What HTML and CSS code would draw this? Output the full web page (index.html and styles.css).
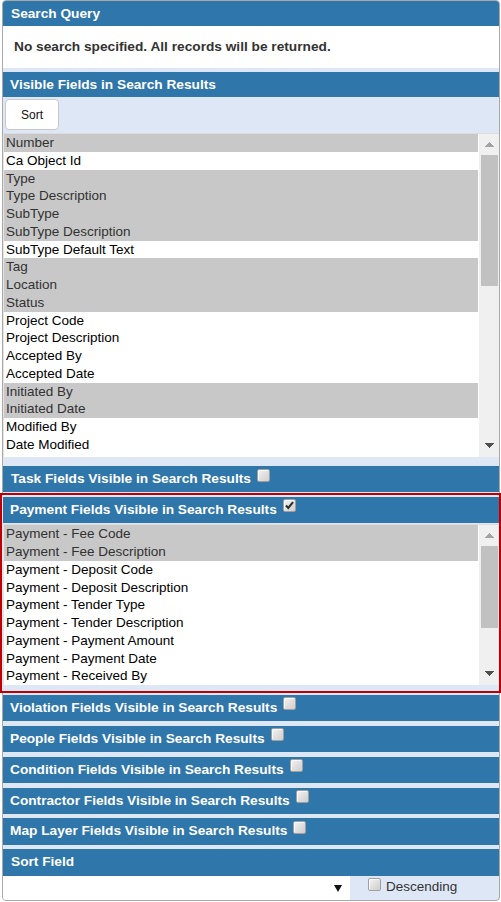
FILE: index.html
```html
<!DOCTYPE html>
<html>
<head>
<meta charset="utf-8">
<link rel="stylesheet" href="styles.css">
</head>
<body>
<div class="panel">
  <div class="hdr hdr-q">Search Query</div>
  <div class="query">No search specified. All records will be returned.</div>
  <div class="hdr hdr-fields">Visible Fields in Search Results</div>
  <div class="toolbar"><button class="sort-btn">Sort</button></div>
  <div class="listbox">
    <div class="options opts-main">
      <div class="opt sel">Number</div>
      <div class="opt">Ca Object Id</div>
      <div class="opt sel">Type</div>
      <div class="opt sel">Type Description</div>
      <div class="opt sel">SubType</div>
      <div class="opt sel">SubType Description</div>
      <div class="opt">SubType Default Text</div>
      <div class="opt sel">Tag</div>
      <div class="opt sel">Location</div>
      <div class="opt sel">Status</div>
      <div class="opt">Project Code</div>
      <div class="opt">Project Description</div>
      <div class="opt">Accepted By</div>
      <div class="opt">Accepted Date</div>
      <div class="opt sel">Initiated By</div>
      <div class="opt sel">Initiated Date</div>
      <div class="opt">Modified By</div>
      <div class="opt">Date Modified</div>
      <div class="opt">Issued By</div>
    </div>
    <div class="sb">
      <div class="sb-btn sb-up"><svg width="9" height="5" viewBox="0 0 9 5" shape-rendering="crispEdges"><polygon points="0,5 4.5,0 9,5" fill="#a3a3a3"/></svg></div>
      <div class="thumb thumb-main"></div>
      <div class="sb-fill"></div>
      <div class="sb-btn sb-down"><svg width="9" height="5" viewBox="0 0 9 5" shape-rendering="crispEdges"><polygon points="0,0 9,0 4.5,5" fill="#505050"/></svg></div>
    </div>
  </div>
  <div class="hdr task">Task Fields Visible in Search Results<span class="cb"></span></div>
  <div class="payment">
    <div class="hdr pay-hdr">Payment Fields Visible in Search Results<span class="cb"><svg width="11" height="11" viewBox="0 0 11 11"><polyline points="2,5.5 4.3,8 9,2.2" fill="none" stroke="#2b2b2b" stroke-width="2"/></svg></span></div>
    <div class="listbox pay-list">
      <div class="options opts-pay">
        <div class="opt sel">Payment - Fee Code</div>
        <div class="opt sel">Payment - Fee Description</div>
        <div class="opt">Payment - Deposit Code</div>
        <div class="opt">Payment - Deposit Description</div>
        <div class="opt">Payment - Tender Type</div>
        <div class="opt">Payment - Tender Description</div>
        <div class="opt">Payment - Payment Amount</div>
        <div class="opt">Payment - Payment Date</div>
        <div class="opt">Payment - Received By</div>
      </div>
      <div class="sb">
        <div class="sb-btn sb-up"><svg width="9" height="5" viewBox="0 0 9 5" shape-rendering="crispEdges"><polygon points="0,5 4.5,0 9,5" fill="#a3a3a3"/></svg></div>
        <div class="thumb thumb-pay"></div>
        <div class="sb-fill"></div>
        <div class="sb-btn sb-down"><svg width="9" height="5" viewBox="0 0 9 5" shape-rendering="crispEdges"><polygon points="0,0 9,0 4.5,5" fill="#505050"/></svg></div>
      </div>
    </div>
  </div>
  <div class="hdr sect first">Violation Fields Visible in Search Results<span class="cb"></span></div>
  <div class="hdr sect">People Fields Visible in Search Results<span class="cb"></span></div>
  <div class="hdr sect">Condition Fields Visible in Search Results<span class="cb"></span></div>
  <div class="hdr sect">Contractor Fields Visible in Search Results<span class="cb"></span></div>
  <div class="hdr sect">Map Layer Fields Visible in Search Results<span class="cb"></span></div>
  <div class="hdr sect sortfield">Sort Field</div>
  <div class="sortrow">
    <div class="select"><svg class="sel-arrow" width="8" height="7" viewBox="0 0 8 7"><polygon points="0,0 8,0 4,7" fill="#111"/></svg></div>
    <div class="desc"><span class="cb cb-desc"></span><span class="desc-text">Descending</span></div>
  </div>
</div>
</body>
</html>
```

FILE: styles.css
```css
* { box-sizing: border-box; }
html, body { margin: 0; padding: 0; background: #fff; }
body { font-family: "Liberation Sans", Arial, sans-serif; width: 501px; }

.panel {
  margin: 0 1px 0 2px;
  border: 1px solid #a9a9a9;
  border-radius: 4px;
  background: #dde7f5;
}

.hdr {
  background: #2f76ab;
  color: #fff;
  font-weight: bold;
  font-size: 13.7px;
  line-height: 25px;
  padding-left: 7px;
  white-space: nowrap;
}
.hdr-q { height: 25px; padding-left: 8px; border-radius: 3px 3px 0 0; }
.query {
  height: 42px;
  background: #fff;
  color: #333;
  font-weight: bold;
  font-size: 13.7px;
  line-height: 42px;
  padding-left: 11px;
}
.hdr-fields { margin-top: 4px; height: 25px; }

.toolbar { height: 36px; padding: 2px 0 0 2px; }
.sort-btn {
  display: block;
  width: 54px;
  height: 31px;
  background: #fff;
  border: 1px solid #c8c8c8;
  border-radius: 4px;
  font-family: "Liberation Sans", Arial, sans-serif;
  font-size: 12px;
  color: #111;
  padding: 0;
}

.listbox {
  display: flex;
  background: #fff;
  border-top: 1px solid #dcdcdc;
  border-left: 1px solid #e4e4e4;
}
.options {
  width: 475px;
  padding-right: 1px;
  overflow: hidden;
  background: #fff;
}
.opts-main { height: 322.75px; }
.opts-pay { height: 159.75px; }
.opt {
  height: 17.75px;
  line-height: 17.75px;
  font-size: 13.5px;
  color: #000;
  padding-left: 2px;
  white-space: nowrap;
}
.opt.sel { background: #c8c8c8; color: #323232; }

.sb {
  width: 20px;
  display: flex;
  flex-direction: column;
  background: #f0f0f0;
}
.sb-btn { display: flex; align-items: center; justify-content: center; }
.sb-btn svg { display: block; }
.sb-up { height: 21px; }
.sb-down { height: 23px; }
.thumb { margin-left: 2px; width: 17px; background: #c1c1c1; }
.thumb-main { height: 130.7px; }
.thumb-pay { height: 81.5px; }
.sb-fill { flex: 1; }

.task { margin-top: 9.25px; height: 26px; padding-left: 8px; }

.payment {
  margin: 1.3px -2px 0 -3px;
  border: 2px solid #c00000;
  padding: 1.4px 0 5.65px 1px;
  background: #dde7f5;
}
.pay-hdr { height: 26.6px; }
.pay-list { margin-top: 1px; }

.sect { height: 26.5px; margin-top: 4.36px; }
.sect.first { margin-top: 2.3px; }
.sortfield { padding-left: 8px; }

.cb {
  display: inline-block;
  width: 13px;
  height: 13px;
  margin-left: 6px;
  vertical-align: 1.5px;
  border: 1px solid #a0a0a0;
  border-radius: 2px;
  background: linear-gradient(135deg, #f4f4f4 0%, #dcdcdc 60%, #cfcfcf 100%);
  box-shadow: inset 1px 1px 0 rgba(255,255,255,0.7);
}
.cb svg { display: block; margin: 0; }

.sortrow { display: flex; height: 24.2px; }
.select {
  width: 347px;
  background: #fff;
  border-radius: 0 0 0 3px;
  display: flex;
  justify-content: flex-end;
  padding-right: 8px;
  padding-top: 9.2px;
}
.sel-arrow { display: block; }
.desc {
  flex: 1;
  display: flex;
  align-items: flex-start;
  padding: 2px 0 0 18px;
}
.cb-desc { margin-left: 0; margin-right: 5px; flex: none; }
.desc-text {
  font-size: 13.5px;
  color: #333;
  line-height: 16px;
  margin-top: 1px;
}
```
